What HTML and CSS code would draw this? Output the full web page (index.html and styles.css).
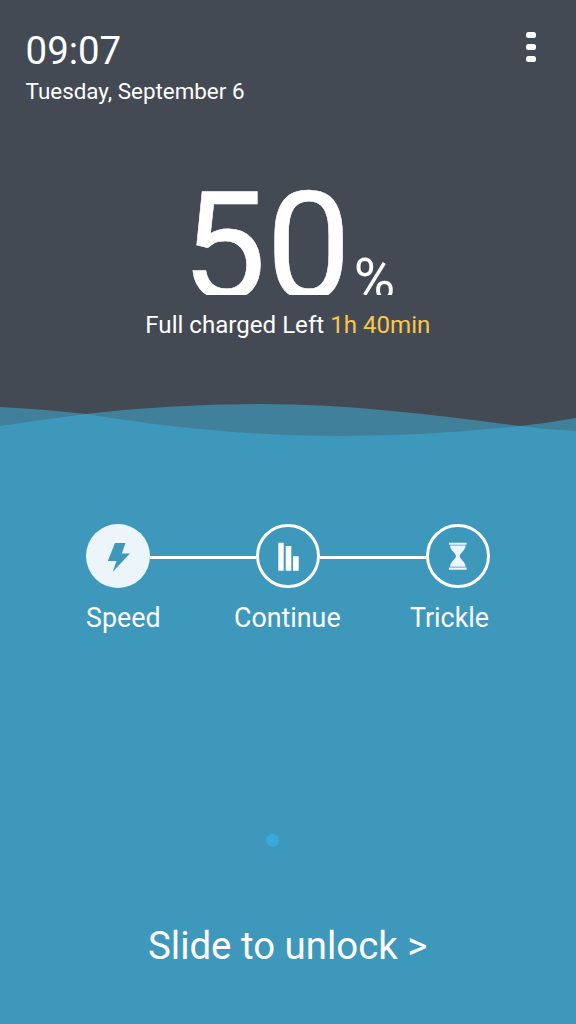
FILE: index.html
```html
<!DOCTYPE html>
<html lang="en">
<head>
<meta charset="utf-8">
<title>Charging lock screen</title>
<link rel="stylesheet" href="styles.css">
</head>
<body>
<main class="screen">
  <section class="top">
    <header class="header">
      <div class="clock">
        <div class="time">09:07</div>
        <div class="date">Tuesday, September 6</div>
      </div>
      <div class="menu"><i></i><i></i><i></i></div>
    </header>
    <div class="level"><span class="number">50</span><span class="percent">%</span></div>
    <p class="remaining"><span>Full charged Left</span><span class="duration">1h 40min</span></p>
  </section>
  <svg class="waves" width="576" height="40" viewBox="0 400 576 40">
    <path fill="#40809a" d="M0 407Q42 409 86 414Q170 404 262 404C350 404 435 415 520 426Q548 423 576 418V440H0Z"/>
    <path fill="#3d98bc" d="M0 426Q42 420 86 414C165 427 250 436 342 436Q430 436 520 426Q548 430 576 431V440H0Z"/>
  </svg>
  <section class="water">
    <div class="stages">
      <div class="track">
        <svg class="stage" width="64" height="64" viewBox="0 0 64 64"><circle cx="32" cy="32" r="32" fill="#ebf5fa"/><path fill="#3d98bc" d="M29 19H39.500L35.800 29.500H44L26.800 47.700L30.500 37H21.800Z"/></svg>
        <span class="line"></span>
        <svg class="stage" width="64" height="64" viewBox="0 0 64 64"><circle cx="32" cy="32" r="30.500" fill="none" stroke="#fff" stroke-width="3"/><path fill="#fff" d="M22.300 18.700H27.700V46.700H22.300ZM29.700 22H35.300V46.700H29.700ZM37 32.300H42.700V46.700H37Z"/></svg>
        <span class="line"></span>
        <svg class="stage" width="64" height="64" viewBox="0 0 64 64"><circle cx="32" cy="32" r="30.500" fill="none" stroke="#fff" stroke-width="3"/><path fill="#ebf5fa" d="M23 18.700H40.700V20.800H23ZM24 21.600H39.600C39.600 26.500 33.700 29.500 33.700 32C33.700 35 39.600 38 39.600 42.700H24C24 38 30 35 30 32C30 29.500 24 26.500 24 21.600ZM23 43.500H40.700V45.700H23Z"/></svg>
      </div>
      <div class="labels"><span>Speed</span><span>Continue</span><span>Trickle</span></div>
    </div>
    <div class="bubble"></div>
    <div class="unlock">Slide to unlock &gt;</div>
  </section>
</main>
</body>
</html>
```
FILE: styles.css
```css
body { margin: 0; }
.screen {
  width: 576px;
  height: 1024px;
  overflow: hidden;
  background: #434a53;
  color: #fff;
  font-family: Roboto, sans-serif;
  white-space: nowrap;
}
.top { height: 400px; box-sizing: border-box; padding-top: 28px; }
.header { display: flex; justify-content: space-between; height: 152px; padding: 0 40px 0 25.6px; }
.time { font-size: 38.4px; line-height: 45px; }
.date { margin-top: 5px; font-size: 22.4px; line-height: 26px; }
.menu { display: flex; flex-direction: column; gap: 6px; padding-top: 4px; }
.menu i { width: 10px; height: 6px; border-radius: 2.5px; background: #fff; }
.level {
  display: flex;
  align-items: baseline;
  height: 114.5px;
  padding-left: 181.5px;
  overflow: hidden;
}
.number { font-size: 151px; line-height: 136px; -webkit-text-stroke: 0.6px #fff; }
.percent { margin-left: 2.5px; font-size: 56.5px; line-height: 60px; }
.remaining { display: flex; gap: 6px; margin: 16.5px 0 0 145.3px; font-size: 24.1px; line-height: 28px; }
.duration { color: #f9c74d; }
.waves { display: block; }
.water { display: flex; flex-direction: column; height: 584px; background: #3d98bc; }
.stages { padding: 84px 86px 0; }
.track { display: flex; align-items: center; }
.stage { flex: none; }
.line { flex: 1; height: 3px; margin-top: 2px; background: #fff; }
.labels { display: grid; grid-template-columns: 148px 176px auto; margin-top: 13.5px; font-size: 26.8px; line-height: 32px; }
.bubble { width: 13px; height: 13px; margin: 200px 0 0 265.5px; border-radius: 50%; background: #39a9db; }
.unlock { margin: 76px 0 0 148px; font-size: 38.4px; line-height: 45px; }
```
